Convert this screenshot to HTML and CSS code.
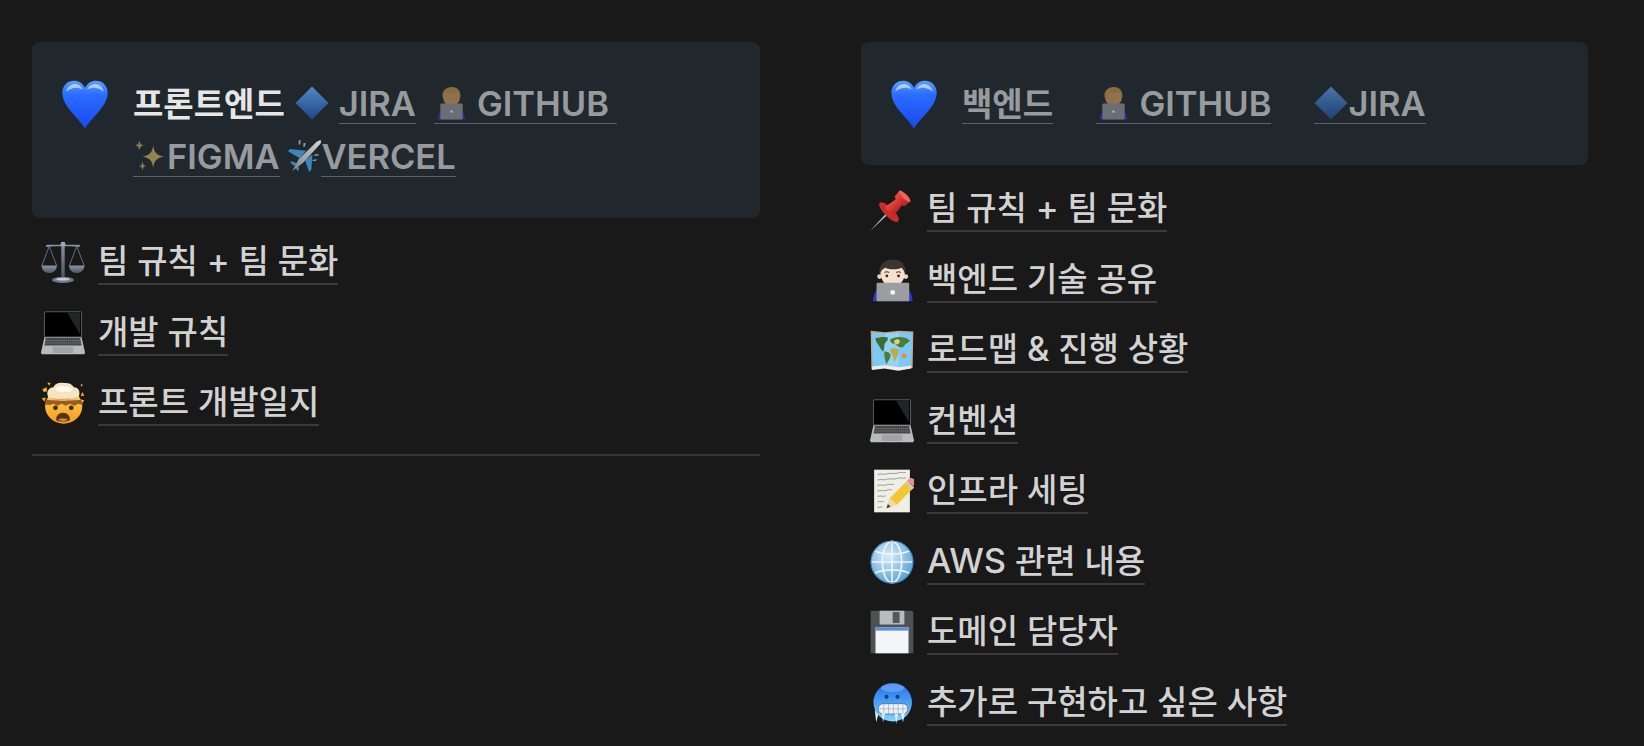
FILE: index.html
```html
<!DOCTYPE html>
<html lang="ko">
<head>
    <meta charset="UTF-8">
    <title>팀 페이지</title>
    <link rel="stylesheet" href="styles.css">
</head>
<body>
    <svg class="sprite" xmlns="http://www.w3.org/2000/svg">
        <defs>
            <linearGradient id="g-heart" x1="0" y1="0" x2="0" y2="1"><stop offset="0" stop-color="#5aa0ff"/><stop offset=".3" stop-color="#2a6cff"/><stop offset="1" stop-color="#1a48f0"/></linearGradient>
            <linearGradient id="g-diamond" x1="0" y1="0" x2="0" y2="1"><stop offset="0" stop-color="#5b9ad8"/><stop offset="1" stop-color="#1d4c9c"/></linearGradient>
            <linearGradient id="g-face" x1="0" y1="0" x2="0" y2="1"><stop offset="0" stop-color="#ffd95a"/><stop offset="1" stop-color="#f59a1f"/></linearGradient>
            <linearGradient id="g-cold" x1="0" y1="0" x2="0" y2="1"><stop offset="0" stop-color="#2a6cea"/><stop offset=".5" stop-color="#4aa0f5"/><stop offset="1" stop-color="#84d6fa"/></linearGradient>
            <linearGradient id="g-steel" x1="0" y1="0" x2="0" y2="1"><stop offset="0" stop-color="#8b96a6"/><stop offset="1" stop-color="#4a5462"/></linearGradient>
            <linearGradient id="g-pin" x1="0" y1="0" x2="1" y2="0"><stop offset="0" stop-color="#ee4a42"/><stop offset="1" stop-color="#b3221f"/></linearGradient>
            <linearGradient id="g-plane" x1="1" y1="0" x2="0" y2="1"><stop offset="0" stop-color="#f4f5f6"/><stop offset="1" stop-color="#8f9499"/></linearGradient>
            <radialGradient id="g-globe" cx=".4" cy=".35" r=".75"><stop offset="0" stop-color="#d9ecf8"/><stop offset="1" stop-color="#4f9bd4"/></radialGradient>
        </defs>
        <symbol id="i-heart" viewBox="0 0 64 64">
            <path d="M32 62C22 46 3 34 3 16 3 7 10 1 18 1c6 0 11 3 14 9 3-6 8-9 14-9 8 0 15 6 15 15 0 18-19 30-29 46z" fill="url(#g-heart)"/>
            <path d="M8 15c1-6 6-10 11-10 5 0 8 3 10 7-6-3-14-3-21 3zM56 15c-1-6-6-10-11-10-5 0-8 3-10 7 6-3 14-3 21 3z" fill="#cfe2ff" opacity=".75"/>
        </symbol>
        <symbol id="i-diamond" viewBox="0 0 64 64">
            <polygon points="32,1 63,32 32,63 1,32" fill="url(#g-diamond)"/>
        </symbol>
        <symbol id="i-tech" viewBox="0 0 64 64">
            <path d="M6 63c1-12 6-18 14-20h24c8 2 13 8 14 20z" fill="#2438c8"/>
            <circle cx="32" cy="21" r="16" fill="#c8965c"/>
            <path d="M15 22C13 8 23 2 33 2c10 0 17 7 16 20-2-6-4-9-7-10-6 2-15 2-20 0-3 2-5 5-7 10z" fill="#b98f4a"/>
            <rect x="11" y="33" width="42" height="30" rx="2" fill="#8f9194"/>
            <circle cx="32" cy="48" r="2.5" fill="#e8e8e8"/>
        </symbol>
        <symbol id="i-tech-light" viewBox="0 0 64 64">
            <path d="M4 63c1-12 6-20 14-22h30c8 2 13 10 14 22z" fill="#2a3cc4"/>
            <circle cx="14" cy="27" r="3.500" fill="#efd2bd"/><circle cx="52" cy="27" r="3.500" fill="#efd2bd"/>
            <path d="M15 20c0-11 8-17 18-17s18 6 18 17c0 12-8 22-18 22S15 32 15 20z" fill="#f6dfcf"/>
            <path d="M14 24C11 10 22 2 34 2c11 0 19 7 17 22-1-5-3-8-5-10-7 3-17 3-24 0-4 2-7 5-8 10z" fill="#3a3533"/>
            <path d="M21 21c2-1 5-1 7 0M38 21c2-1 5-1 7 0" stroke="#4a4240" stroke-width="1.500" fill="none"/>
            <circle cx="24.500" cy="26" r="2" fill="#2f2a28"/><circle cx="41.500" cy="26" r="2" fill="#2f2a28"/>
            <rect x="9.500" y="36" width="47.500" height="27" rx="1.500" fill="#9b9da1"/>
            <circle cx="33" cy="50" r="3.500" fill="#f4f4f4"/>
        </symbol>
        <symbol id="i-sparkles" viewBox="0 0 64 64">
            <path d="M38 12c2 13 6 18 20 21-14 3-18 8-20 21-2-13-6-18-20-21 14-3 18-8 20-21z" fill="#c9b060"/>
            <path d="M12 2c1 7 3 9 8 10-5 1-7 3-8 10-1-7-3-9-8-10 5-1 7-3 8-10z" fill="#b8a060"/>
            <path d="M18 42c1 6 2 8 7 9-5 1-6 3-7 9-1-6-2-8-7-9 5-1 6-3 7-9z" fill="#b8a060"/>
        </symbol>
        <symbol id="i-plane" viewBox="0 0 64 64">
            <path d="M20 3l4-1-1 8-3 1zM29 8l4-1-1 7-3 1zM57 31l1-3-8 1-1 3zM53 41l1-3-7 1-1 3z" fill="#9fb4c6"/>
            <path d="M0 23l4-4 30 3-12 14zM40 62l4-4 2-29-14 11zM4 44l3-2 10 4-5 5zM18 60l3-3-3-10-5 5z" fill="#3f97dc"/>
            <path d="M59 3c4-2 4 2 2 6L28 45 8 60l12-22L54 5z" fill="url(#g-plane)"/>
        </symbol>
        <symbol id="i-scales" viewBox="0 0 64 64">
            <rect x="29.500" y="3" width="5" height="52" fill="url(#g-steel)"/>
            <path d="M8 7h48l1 3-14-1H21L7 10z" fill="#8a93a0"/>
            <circle cx="32" cy="6" r="3.500" fill="#9ea6b2"/>
            <path d="M12 9L1 38M12 9l11 29M52 9L41 38M52 9l11 29" stroke="#6d7785" stroke-width="1.300" fill="none"/>
            <path d="M1 37h22c0 7-5 11-11 11S1 44 1 37zM41 37h22c0 7-5 11-11 11s-11-4-11-11z" fill="url(#g-steel)"/>
            <ellipse cx="32" cy="58" rx="16" ry="4.500" fill="#6f7988"/>
            <ellipse cx="32" cy="57" rx="10" ry="2" fill="#c3cbd6"/>
        </symbol>
        <symbol id="i-laptop" viewBox="0 0 64 64">
            <rect x="5" y="1" width="54" height="37" rx="2" fill="#000" stroke="#56585c" stroke-width="1.500"/>
            <path d="M38 2h19v32z" fill="#232428"/>
            <path d="M5 38h54l5 22-1 3H1l-1-3z" fill="#b8babd"/>
            <path d="M7 39h50l2 11H5z" fill="#45474b"/>
            <path d="M6 43h52M6 46.500h52" stroke="#8d8f93" stroke-width="1" stroke-dasharray="2 1"/>
            <rect x="17" y="52" width="30" height="9" fill="#a0a2a5"/>
        </symbol>
        <symbol id="i-explode" viewBox="0 0 64 64">
            <ellipse cx="33" cy="37" rx="27" ry="25" fill="url(#g-face)"/>
            <path d="M7 27c8 2 44 2 52 0l2 8-7-2-5 3-7-3-6 3-6-3-6 3-6-3-5 2-7-1z" fill="#9a5a22"/>
            <path d="M10 22C7 14 13 9 18 9c3-6 9-7 15-6 6-1 12 1 15 6 6 0 10 6 7 13-1 5-8 6-12 5-7 2-15 2-21 0-4 1-11 0-12-5z" fill="#f7e4bf"/>
            <path d="M21 12c3-5 10-6 14-3 5-2 10 0 11 4-3 4-7 3-10 2-4 2-11 2-15-3z" fill="#fffaf0"/>
            <path d="M12 24c5 2 8 1 13 2 5-1 11 1 16-1 5 2 9 0 13-2-1 4-7 5-11 4-7 2-15 2-21 0-4 1-9 0-10-3z" fill="#dba862"/>
            <path d="M2 12l6-3 1 6-5 1zM9 2l5 1-2 4zM58 4l3 2-3 2zM60 16l3 5-5 1zM1 25l6-1-2 6zM58 27l5 1-3 4z" fill="#f5b32a"/>
            <circle cx="21" cy="39" r="3.500" fill="#4a2c10"/><circle cx="44" cy="39" r="3.500" fill="#4a2c10"/>
            <path d="M22 56c0-6 4-10 10-10s10 4 10 10c0 2-4 3-10 3s-10-1-10-3z" fill="#5a3412"/>
            <path d="M25 56c3-2 11-2 14 0 0 1-3 2-7 2s-7-1-7-2z" fill="#c98a58"/>
        </symbol>
        <symbol id="i-pin" viewBox="0 0 64 64">
            <g transform="translate(26 38) rotate(45) scale(1.12)">
                <path d="M-1.500 -2h3L0 33z" fill="#a9c4dc"/>
                <ellipse cx="0" cy="-2" rx="17" ry="6" fill="#c92d29"/>
                <path d="M-8 -4L-5.500 -21h11L8 -4C4 -1 -4 -1 -8 -4z" fill="url(#g-pin)"/>
                <path d="M-10 -31c0-2 20-2 20 0l-1 9c-2 3-16 3-18 0z" fill="url(#g-pin)"/>
                <ellipse cx="0" cy="-31" rx="10" ry="3" fill="#f0635a"/>
            </g>
        </symbol>
        <symbol id="i-map" viewBox="0 0 64 64">
            <path d="M1 4l21 2 20-2 21 1-1 53-20 2-20-2-20 2z" fill="#c9a47c"/>
            <path d="M3 7l19 1 20-2 19 1-1 49-18 2-20-2-18 2z" fill="#7cc8f6"/>
            <path d="M22 8v48l20 2V6z" fill="#92d4f8"/>
            <path d="M8 15c6-2 14-3 18-1 1 4-4 6-5 10-1 4 0 7-2 10-3-2-5-7-7-10-2-2-4-5-4-9z" fill="#3f6d2c"/>
            <path d="M21 34c4 0 9 2 9 6-1 5-4 9-6 13-2-5-4-13-3-19z" fill="#4d7d30"/>
            <path d="M29 17c5-4 14-5 22-3 3 1 6 2 7 5-3 3-7 4-9 8-2 2-4 1-6 1-4-1-5-5-8-5-3 0-6-3-6-6z" fill="#4d7d30"/>
            <path d="M30 30c4-2 9-1 12 2 0 6-3 12-7 17-1-4-1-8-3-11-2-2-3-5-2-8z" fill="#b7ad52"/>
            <path d="M35 18l5-2 4 3-3 5-5-1z" fill="#e0d07a"/>
            <path d="M46 38c3-2 7-1 8 2 0 3-5 5-8 3z" fill="#e0913c"/>
            <path d="M3 56l18-2 20 3 19-2v4l-19 3-20-3-18 2z" fill="#f1ece4"/>
        </symbol>
        <symbol id="i-memo" viewBox="0 0 64 64">
            <rect x="6" y="1" width="52" height="62" fill="#efefe8"/>
            <path d="M11 8c6-2 9 1 14-1s10 1 15-1 7 0 12-1M11 16c5-2 9 1 13-1s10 1 14-1 9 0 15-1M11 24c5-2 9 1 13-1s8 1 11-1M11 32c5-2 9 1 13-1s5 0 8-1M11 40c5-2 8 1 12-1M11 48c4-2 6 1 9-1M11 56c3-1 5 0 7-1" stroke="#75787c" stroke-width="1" fill="none"/>
            <path d="M24 57l5-15 25-25 10 10-25 25z" fill="#f4c534"/>
            <path d="M51 20l3-3 10 10-3 3z" fill="#c9c9c9"/>
            <path d="M54 17l3-3c2-2 5-1 7 1s3 5 1 7l-2 3z" fill="#ee8f86"/>
            <path d="M24 57l5-15 10 10z" fill="#f0d8ae"/>
            <path d="M24 57l2-6 4 4z" fill="#3a3a3a"/>
        </symbol>
        <symbol id="i-globe" viewBox="0 0 64 64">
            <circle cx="32" cy="32" r="31" fill="url(#g-globe)"/>
            <g fill="none" stroke="#eaf4fb" stroke-width="2.500">
                <ellipse cx="32" cy="32" rx="14" ry="30"/>
                <path d="M32 2v60M2 32h60M7 16c14 6 36 6 50 0M7 48c14-6 36-6 50 0"/>
            </g>
            <circle cx="32" cy="32" r="30.500" fill="none" stroke="#3f86c4" stroke-width="1.500"/>
        </symbol>
        <symbol id="i-floppy" viewBox="0 0 64 64">
            <path d="M1 1h60l2 2v60H1z" fill="#4f5154"/>
            <rect x="14" y="1" width="36" height="20" rx="1" fill="#b9bbbe"/>
            <rect x="33" y="3" width="10" height="16" fill="#55575a"/>
            <rect x="8" y="25" width="48" height="38" fill="#f4f5f7"/>
            <rect x="8" y="25" width="48" height="5" fill="#5f8fd4"/>
        </symbol>
        <symbol id="i-cold" viewBox="0 0 64 64">
            <circle cx="33" cy="31" r="28" fill="url(#g-cold)"/>
            <ellipse cx="33" cy="10" rx="17" ry="6" fill="#8cbcf8" opacity=".5"/>
            <circle cx="24" cy="23" r="3" fill="#17407f"/><circle cx="40" cy="23" r="3" fill="#17407f"/>
            <rect x="12" y="33" width="43" height="15" rx="7" fill="#eef2f5" stroke="#2f5f9e" stroke-width="1"/>
            <path d="M13 40.500h41M20 33v15M27 33v15M34 33v15M41 33v15M48 33v15" stroke="#9aa8b8" stroke-width="1"/>
            <path d="M7 42l2 18 3-11zM17 47l2 13 3-13zM36 48l2 14 3-14zM45 48l3 12 3-15z" fill="#d6f1fd"/>
        </symbol>
    </svg>

    <div class="columns">
        <div class="column">
            <div class="callout">
                <svg class="callout-icon"><use href="#i-heart"/></svg>
                <div class="callout-text"><strong>프론트엔드</strong><svg class="emoji emoji-diamond"><use href="#i-diamond"/></svg><a class="link dim"><span class="latin">JIRA</span></a>  <a class="link dim"><svg class="emoji emoji-wide"><use href="#i-tech"/></svg> <span class="latin">GITHUB</span> </a> <a class="link dim"><svg class="emoji"><use href="#i-sparkles"/></svg><span class="latin">FIGMA</span></a> <svg class="emoji emoji-plane"><use href="#i-plane"/></svg><a class="link dim"><span class="latin">VERCEL</span></a></div>
            </div>
            <ul class="pages">
                <li><svg class="page-icon"><use href="#i-scales"/></svg><a class="link">팀 규칙 <span class="latin">+</span> 팀 문화</a></li>
                <li><svg class="page-icon"><use href="#i-laptop"/></svg><a class="link">개발 규칙</a></li>
                <li><svg class="page-icon"><use href="#i-explode"/></svg><a class="link">프론트 개발일지</a></li>
            </ul>
            <hr class="divider">
        </div>
        <div class="column">
            <div class="callout callout-short">
                <svg class="callout-icon"><use href="#i-heart"/></svg>
                <div class="callout-text"><a class="link dim spaced">백엔드</a><a class="link dim spaced"><svg class="emoji emoji-wide"><use href="#i-tech"/></svg> <span class="latin">GITHUB</span></a><a class="link dim"><svg class="emoji"><use href="#i-diamond"/></svg><span class="latin">JIRA</span></a></div>
            </div>
            <ul class="pages">
                <li><svg class="page-icon"><use href="#i-pin"/></svg><a class="link">팀 규칙 <span class="latin">+</span> 팀 문화</a></li>
                <li><svg class="page-icon"><use href="#i-tech-light"/></svg><a class="link">백엔드 기술 공유</a></li>
                <li><svg class="page-icon"><use href="#i-map"/></svg><a class="link">로드맵 <span class="latin">&amp;</span> 진행 상황</a></li>
                <li><svg class="page-icon"><use href="#i-laptop"/></svg><a class="link">컨벤션</a></li>
                <li><svg class="page-icon"><use href="#i-memo"/></svg><a class="link">인프라 세팅</a></li>
                <li><svg class="page-icon"><use href="#i-globe"/></svg><a class="link"><span class="latin">AWS</span> 관련 내용</a></li>
                <li><svg class="page-icon"><use href="#i-floppy"/></svg><a class="link">도메인 담당자</a></li>
                <li><svg class="page-icon"><use href="#i-cold"/></svg><a class="link">추가로 구현하고 싶은 사항</a></li>
            </ul>
        </div>
    </div>
</body>
</html>
```

FILE: styles.css
```css
html, body {
    height: 100%;
    overflow: hidden;
}
body {
    margin: 0;
    background-color: #191919;
    color: #d2d2d2;
    font-family: Inter, "Noto Sans CJK KR", sans-serif;
    font-size: 33px;
    font-weight: 500;
}
.sprite {
    display: block;
    width: 0;
    height: 0;
}
.columns {
    display: grid;
    grid-template-columns: 728px 727px;
    gap: 101px;
    padding: 42px 0 0 32px;
}
.callout {
    display: flex;
    gap: 23px;
    min-height: 176px;
    box-sizing: border-box;
    padding: 36px 32px 0 28px;
    background-color: #20282e;
    border-radius: 8px;
}
.callout-short {
    min-height: 123px;
}
.callout-icon {
    flex: none;
    width: 50px;
    height: 50px;
    margin-top: 2px;
}
.callout-text {
    line-height: 53px;
    white-space: pre-wrap;
}
.callout-text strong {
    font-weight: 600;
    color: #e6e6e6;
}
.latin {
    font-size: 34.5px;
}
.link {
    white-space: pre;
}
.pages .link {
    margin-top: 2px;
    line-height: 40px;
    padding-bottom: 2px;
    border-bottom: 2px solid #3a3a3a;
}
.callout .link {
    display: inline-block;
    line-height: 34px;
    padding-bottom: 2px;
    border-bottom: 1px solid rgba(255, 255, 255, .4);
}
.dim {
    opacity: .68;
    font-weight: 600;
}
.spaced {
    margin-right: 43px;
}
.emoji {
    width: 34px;
    height: 34px;
    vertical-align: -4px;
}
.emoji-wide {
    width: 35px;
}
.emoji-diamond {
    margin: 0 10px;
    opacity: .85;
}
.emoji-plane {
    margin-right: -1px;
    opacity: .85;
}
.pages {
    list-style: none;
    margin: 9px 0 0;
    padding: 0;
}
.pages li {
    display: flex;
    align-items: center;
    height: 70.5px;
    padding-left: 9px;
    white-space: nowrap;
}
.page-icon {
    flex: none;
    width: 44px;
    height: 44px;
    margin-right: 13px;
}
.divider {
    height: 2px;
    margin: 15px 0 0;
    border: none;
    background-color: #333333;
}
```
